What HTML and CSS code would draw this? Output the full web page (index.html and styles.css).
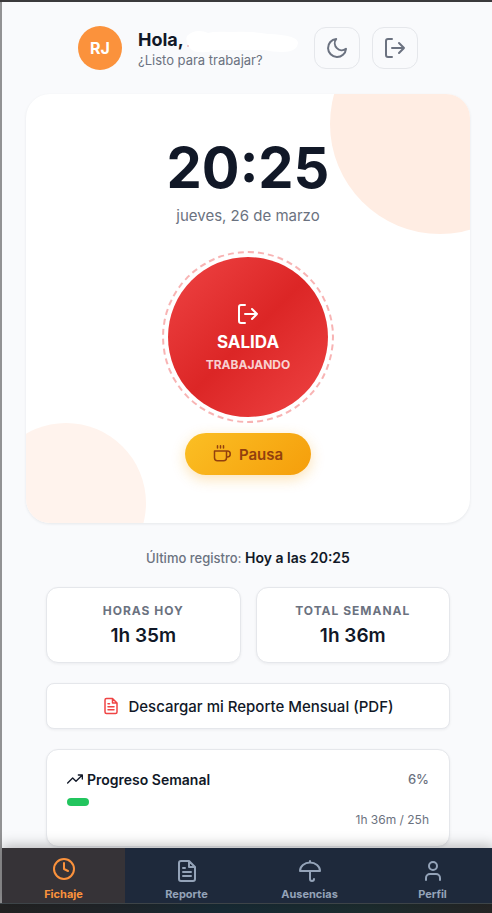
FILE: index.html
```html
<!DOCTYPE html>
<html lang="es">
<head>
<meta charset="utf-8">
<meta name="viewport" content="width=device-width, initial-scale=1">
<title>Fichaje</title>
<link rel="stylesheet" href="styles.css">
</head>
<body>
<div class="app">
  <div class="content">
    <header class="header">
      <div class="avatar">RJ</div>
      <div class="greeting">
        <h1 class="hello">Hola,<svg class="name-mask" viewBox="0 0 114 24" aria-hidden="true"><path d="M3 4Q8 -1 15 -1Q20 -1 24 1Q30 -1 48 0Q68-1 84 2Q114 3 114 11Q113 20 98 20Q88 20 80 18L30 18Q25 21 16 20Q7 20 5 14Q1 9 3 4Z" fill="#fff"/><circle cx="4" cy="14" r=".7" fill="#e08080"/></svg></h1>
        <p class="sub">¿Listo para trabajar?</p>
      </div>
      <div class="actions">
        <button class="icon-btn" aria-label="Modo oscuro"><svg class="icon24" viewBox="0 0 24 24"><path d="M21 12.800A9 9 0 1 1 11.200 3 7 7 0 0 0 21 12.800z"/></svg></button>
        <button class="icon-btn" aria-label="Cerrar sesión"><svg class="icon24" viewBox="0 0 24 24"><path d="M9 3H5a2 2 0 0 0-2 2v14a2 2 0 0 0 2 2h4M9 12h12M16 7l5 5-5 5"/></svg></button>
      </div>
    </header>

    <main class="main">
      <section class="clock-card">
        <div class="time">20:25</div>
        <p class="date">jueves, 26 de marzo</p>
        <button class="punch">
          <svg class="icon24" viewBox="0 0 24 24"><path d="M9 3H5a2 2 0 0 0-2 2v14a2 2 0 0 0 2 2h4M9 12h12M16 7l5 5-5 5"/></svg>
          <span class="punch-title">SALIDA</span>
          <span class="punch-state">TRABAJANDO</span>
        </button>
        <button class="pause">
          <svg class="icon18" viewBox="0 0 24 24"><path d="M18 8h1a4 4 0 0 1 0 8h-1M2 8h16v9a4 4 0 0 1-4 4H6a4 4 0 0 1-4-4zM6 1v3M10 1v3M14 1v3"/></svg>
          Pausa
        </button>
      </section>

      <div class="details">
        <p class="last">Último registro: <strong>Hoy a las 20:25</strong></p>
        <div class="stats">
          <section class="stat"><h2>HORAS HOY</h2><p>1h 35m</p></section>
          <section class="stat"><h2>TOTAL SEMANAL</h2><p>1h 36m</p></section>
        </div>
        <button class="download">
          <svg class="icon18 red" viewBox="0 0 24 24"><path d="M14 2H6a2 2 0 0 0-2 2v16a2 2 0 0 0 2 2h12a2 2 0 0 0 2-2V8zM14 2v6h6M16 13H8M16 17H8M10 9H8"/></svg>
          Descargar mi Reporte Mensual (PDF)
        </button>
        <section class="progress-card">
          <div class="progress-head">
            <h2><svg class="icon16" viewBox="0 0 24 24"><path d="M23 6l-9.500 9.500-5-5L1 18M17 6h6v6"/></svg>Progreso Semanal</h2>
            <span class="percent">6%</span>
          </div>
          <div class="track"><div class="bar" style="width:6%"></div></div>
          <p class="amount">1h 36m / 25h</p>
        </section>
      </div>
    </main>
  </div>

  <nav class="nav">
    <a class="tab active" href="#"><svg class="icon24" viewBox="0 0 24 24"><circle cx="12" cy="12" r="10"/><path d="M12 6v6l4 2"/></svg>Fichaje</a>
    <a class="tab" href="#"><svg class="icon24" viewBox="0 0 24 24"><path d="M14 2H6a2 2 0 0 0-2 2v16a2 2 0 0 0 2 2h12a2 2 0 0 0 2-2V8zM14 2v6h6M16 13H8M16 17H8M10 9H8"/></svg>Reporte</a>
    <a class="tab" href="#"><svg class="icon24" viewBox="0 0 24 24"><path d="M22 12a10 8.500 0 0 0-20 0zM12 12v8a2 2 0 0 0 4 0M12 2v1.500"/></svg>Ausencias</a>
    <a class="tab" href="#"><svg class="icon24" viewBox="0 0 24 24"><path d="M19 21v-2a4 4 0 0 0-4-4H9a4 4 0 0 0-4 4v2"/><circle cx="12" cy="7" r="4"/></svg>Perfil</a>
  </nav>
</div>
<div class="taskbar"></div>
</body>
</html>
```
FILE: styles.css
```css
* { box-sizing: border-box; }
body {
  margin: 0;
  height: 100vh;
  display: flex;
  flex-direction: column;
  overflow: hidden;
  font-family: Inter, "Liberation Sans", sans-serif;
  color: #111827;
  background: #f9fafc;
  border-top: 2px solid #3b3a3c;
}
h1, h2, p { margin: 0; }
button { font-family: inherit; cursor: pointer; }
a { text-decoration: none; }
svg { fill: none; stroke: currentColor; stroke-width: 2; stroke-linecap: round; stroke-linejoin: round; flex: none; }
.icon24 { width: 24px; height: 24px; }
.icon18 { width: 18px; height: 18px; }
.icon16 { width: 16px; height: 16px; }
.red { color: #ef4444; }

.app {
  flex: 1;
  min-height: 0;
  display: flex;
  flex-direction: column;
  border-left: 2px solid #929294;
  margin-right: -2px;
}
.content { flex: 1; min-height: 0; overflow: hidden; padding: 24px; }

.header { display: flex; justify-content: center; align-items: center; gap: 16px; height: 44px; }
.avatar {
  width: 44px; height: 44px;
  border-radius: 50%;
  background: #fb923c;
  color: #fff;
  font-size: 16px; font-weight: 700;
  display: flex; align-items: center; justify-content: center;
}
.greeting { width: 160px; }
.hello { padding-top: 2px; font-size: 18px; line-height: 22px; font-weight: 700; position: relative; }
.name-mask { position: absolute; left: 46px; top: 5px; width: 114px; height: 24px; overflow: visible; stroke: none; }
.sub { font-size: 13px; line-height: 18px; color: #6b7280; white-space: nowrap; }
.actions { display: flex; gap: 12px; }
.icon-btn {
  width: 46px; height: 42px;
  padding: 0;
  display: flex; align-items: center; justify-content: center;
  color: #6b7280;
  background: transparent;
  border: 1px solid #e5e7eb;
  border-radius: 12px;
}

.clock-card {
  position: relative;
  overflow: hidden;
  margin-top: 24px;
  padding: 40px 24px 48px;
  display: flex; flex-direction: column; align-items: center;
  background: #fff;
  border-radius: 24px;
  box-shadow: 0 1px 3px rgba(15, 23, 42, 0.08);
}
.clock-card > * { position: relative; }
.clock-card::before, .clock-card::after { content: ""; position: absolute; border-radius: 50%; }
.clock-card::before { width: 220px; height: 220px; top: -80px; right: -80px; background: #ffede3; }
.clock-card::after { width: 160px; height: 160px; bottom: -60px; left: -40px; background: #fff3ed; }
.time { font-size: 56px; line-height: 68px; font-weight: 700; }
.date { margin-top: 4px; font-size: 15px; line-height: 20px; color: #6b7280; }
.punch {
  width: 160px; height: 160px;
  margin-top: 31px;
  padding: 0;
  border: 0;
  border-radius: 50%;
  display: flex; flex-direction: column; align-items: center; justify-content: center;
  color: #fff;
  background: linear-gradient(135deg, #ef4444, #dc2626 50%, #ef4444);
  z-index: 1;
}
.punch::after {
  content: "";
  position: absolute;
  inset: -6px;
  border: 2px dashed #ef4444;
  border-radius: 50%;
  opacity: 0.4;
}
.punch-title { margin-top: 4px; font-size: 17px; line-height: 24px; font-weight: 700; }
.punch-state { margin-top: 4px; font-size: 12px; line-height: 14px; font-weight: 700; color: #ffffffcc; }
.pause {
  height: 42px;
  margin-top: 16px;
  padding: 0 28px;
  display: flex; align-items: center; gap: 8px;
  border: 0;
  border-radius: 21px;
  font-size: 15px; font-weight: 600;
  color: #92400e;
  background: linear-gradient(135deg, #fbbf24, #f59e0b);
  box-shadow: 0 4px 14px rgba(245, 158, 11, 0.3);
}

.details { padding: 0 20px; }
.last { margin-top: 25px; font-size: 13px; line-height: 20px; font-weight: 500; text-align: center; color: #6b7280; }
.last strong { font-size: 14px; font-weight: 600; color: #111827; }
.stats { margin-top: 19px; display: grid; grid-template-columns: 1fr 1fr; gap: 15px; }
.stat, .download, .progress-card { background: #fff; border: 1px solid #e5e7eb; box-shadow: 0 1px 3px rgba(15, 23, 42, 0.06); }
.stat { height: 76px; padding: 14px 8px; border-radius: 12px; text-align: center; }
.stat h2 { font-size: 12px; line-height: 18px; font-weight: 700; letter-spacing: 1px; color: #6b7280; }
.stat p { margin-top: 4px; font-size: 19px; line-height: 24px; font-weight: 600; }
.download {
  width: 100%; height: 46px;
  margin-top: 20px;
  display: flex; align-items: center; justify-content: center; gap: 8px;
  border-radius: 8px;
  font-size: 15px; font-weight: 500;
  color: #111827;
}
.progress-card { height: 98px; margin-top: 20px; padding: 20px; border-radius: 12px; }
.progress-head { display: flex; justify-content: space-between; align-items: center; height: 18px; }
.progress-head h2 { display: flex; align-items: center; gap: 4px; font-size: 14px; font-weight: 600; }
.percent { font-size: 13px; font-weight: 500; color: #6b7280; }
.track { margin-top: 10px; height: 8px; }
.bar { height: 8px; border-radius: 4px; background: #22c55e; }
.amount { margin-top: 4px; font-size: 12px; line-height: 20px; text-align: right; color: #6b7280; }

.nav {
  position: relative;
  height: 55px;
  display: grid;
  grid-template-columns: repeat(4, 1fr);
  background: #1e293b;
  box-shadow: 0 -3px 12px rgba(0, 0, 0, 0.25);
}
.tab {
  display: flex; flex-direction: column; align-items: center; justify-content: flex-end;
  gap: 3px;
  padding-bottom: 1px;
  font-size: 11px; line-height: 16px; font-weight: 700;
  color: #94a3b8;
}
.tab.active { color: #fb923c; background: #363337; }
.tab.active .icon24 { margin-bottom: 2px; }
.taskbar { height: 10px; border-top: 1px solid #424a4e; background: linear-gradient(90deg, #222, #202428 20%, #172a34 45%, #1c2c2e 75%, #252525); }
```
